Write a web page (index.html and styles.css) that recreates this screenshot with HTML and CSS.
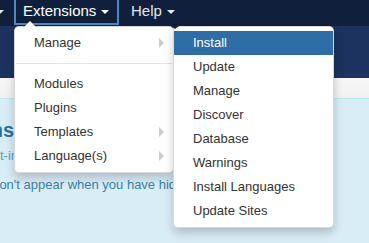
FILE: index.html
```html
<!DOCTYPE html>
<html lang="en">
<head>
    <meta charset="UTF-8">
    <title>Extensions menu</title>
    <link rel="stylesheet" href="styles.css">
</head>
<body>
    <nav class="navbar">
        <ul class="nav">
            <li class="nav-item nav-cut"><span class="caret"></span></li>
            <li class="nav-item active">Extensions<span class="caret"></span></li>
            <li class="nav-item">Help<span class="caret"></span></li>
        </ul>
    </nav>

    <div class="header"></div>
    <div class="subhead"></div>

    <main class="alert">
        <h3 class="alert-heading">Notifications</h3>
        <p class="alert-link">post-installation messages</p>
        <p class="alert-text">won't appear when you have hidden them.</p>
    </main>

    <ul class="dropdown menu-main">
        <li class="has-sub">Manage</li>
        <li class="divider"></li>
        <li>Modules</li>
        <li>Plugins</li>
        <li class="has-sub">Templates</li>
        <li class="has-sub">Language(s)</li>
    </ul>

    <ul class="dropdown menu-sub">
        <li class="active">Install</li>
        <li>Update</li>
        <li>Manage</li>
        <li>Discover</li>
        <li>Database</li>
        <li>Warnings</li>
        <li>Install Languages</li>
        <li>Update Sites</li>
    </ul>
</body>
</html>
```

FILE: styles.css
```css
* {
    box-sizing: border-box;
    margin: 0;
    padding: 0;
}

body {
    font-family: 'Liberation Sans', Arial, sans-serif;
    font-size: 13px;
    background: #d9edf7;
    overflow: hidden;
}

.navbar {
    background: #10203c;
    height: 26px;
}

.nav {
    display: flex;
    list-style: none;
}

.nav-item {
    color: #e4e8ee;
    font-size: 15px;
    line-height: 22px;
    height: 25px;
    padding: 0 8px 0 12px;
    white-space: nowrap;
}

.nav-cut {
    width: 14px;
    padding: 0;
}

.nav-cut .caret {
    margin-left: -4px;
}

.nav-item.active {
    color: #fff;
    border: 2px solid #4f88c2;
    border-top: 0;
    width: 105px;
    padding: 0 0 0 7px;
}

.caret {
    display: inline-block;
    width: 0;
    height: 0;
    vertical-align: middle;
    margin-left: 5px;
    border-top: 4px solid currentColor;
    border-left: 4px solid transparent;
    border-right: 4px solid transparent;
}

.header {
    background: #1c335f;
    height: 52px;
}

.subhead {
    background: linear-gradient(#f7f7f7, #f1f1f1);
    height: 20px;
}

.alert {
    border-top: 1px solid #bce8f1;
    padding-top: 19px;
    color: #3a87ad;
}

.alert-heading {
    font-size: 20px;
    line-height: 24px;
    margin-left: -107px;
    color: #2f7099;
}

.alert-link {
    line-height: 18px;
    margin-top: 5px;
    margin-left: -21px;
    color: #5b9ec6;
}

.alert-text {
    line-height: 18px;
    margin-top: 11px;
    margin-left: -10px;
    color: #3a7fa3;
}

.dropdown {
    position: absolute;
    top: 26px;
    list-style: none;
    background: #fff;
    border: 1px solid rgba(0, 0, 0, 0.15);
    border-radius: 5px;
    box-shadow: 0 5px 10px rgba(0, 0, 0, 0.2);
    padding: 4px 0;
}

.dropdown li {
    position: relative;
    color: #333;
    line-height: 24px;
    padding-left: 19px;
}

.menu-main {
    left: 14px;
    width: 160px;
}

/* caret pointing up at the Extensions item */
.menu-main::before,
.menu-main::after {
    content: '';
    position: absolute;
    border-left: 7px solid transparent;
    border-right: 7px solid transparent;
}

.menu-main::before {
    left: 8px;
    top: -7px;
    border-bottom: 7px solid rgba(0, 0, 0, 0.2);
}

.menu-main::after {
    left: 9px;
    top: -6px;
    border-left-width: 6px;
    border-right-width: 6px;
    border-bottom: 6px solid #fff;
}

.dropdown .divider {
    height: 1px;
    margin: 8px 1px;
    background: #e5e5e5;
    padding: 0;
}

.has-sub::after {
    content: '';
    position: absolute;
    right: 9px;
    top: 7px;
    border-left: 5px solid #cccccc;
    border-top: 5px solid transparent;
    border-bottom: 5px solid transparent;
}

.menu-sub {
    left: 173px;
    width: 161px;
    border-top-left-radius: 0;
    z-index: 2;
}

.menu-sub::before {
    content: '';
    position: absolute;
    left: -3px;
    top: -1px;
    border-top: 3px solid #10203c;
    border-left: 4px solid transparent;
    border-right: 4px solid transparent;
}

.menu-sub .active {
    background: #2f6da7;
    color: #fff;
}
```
